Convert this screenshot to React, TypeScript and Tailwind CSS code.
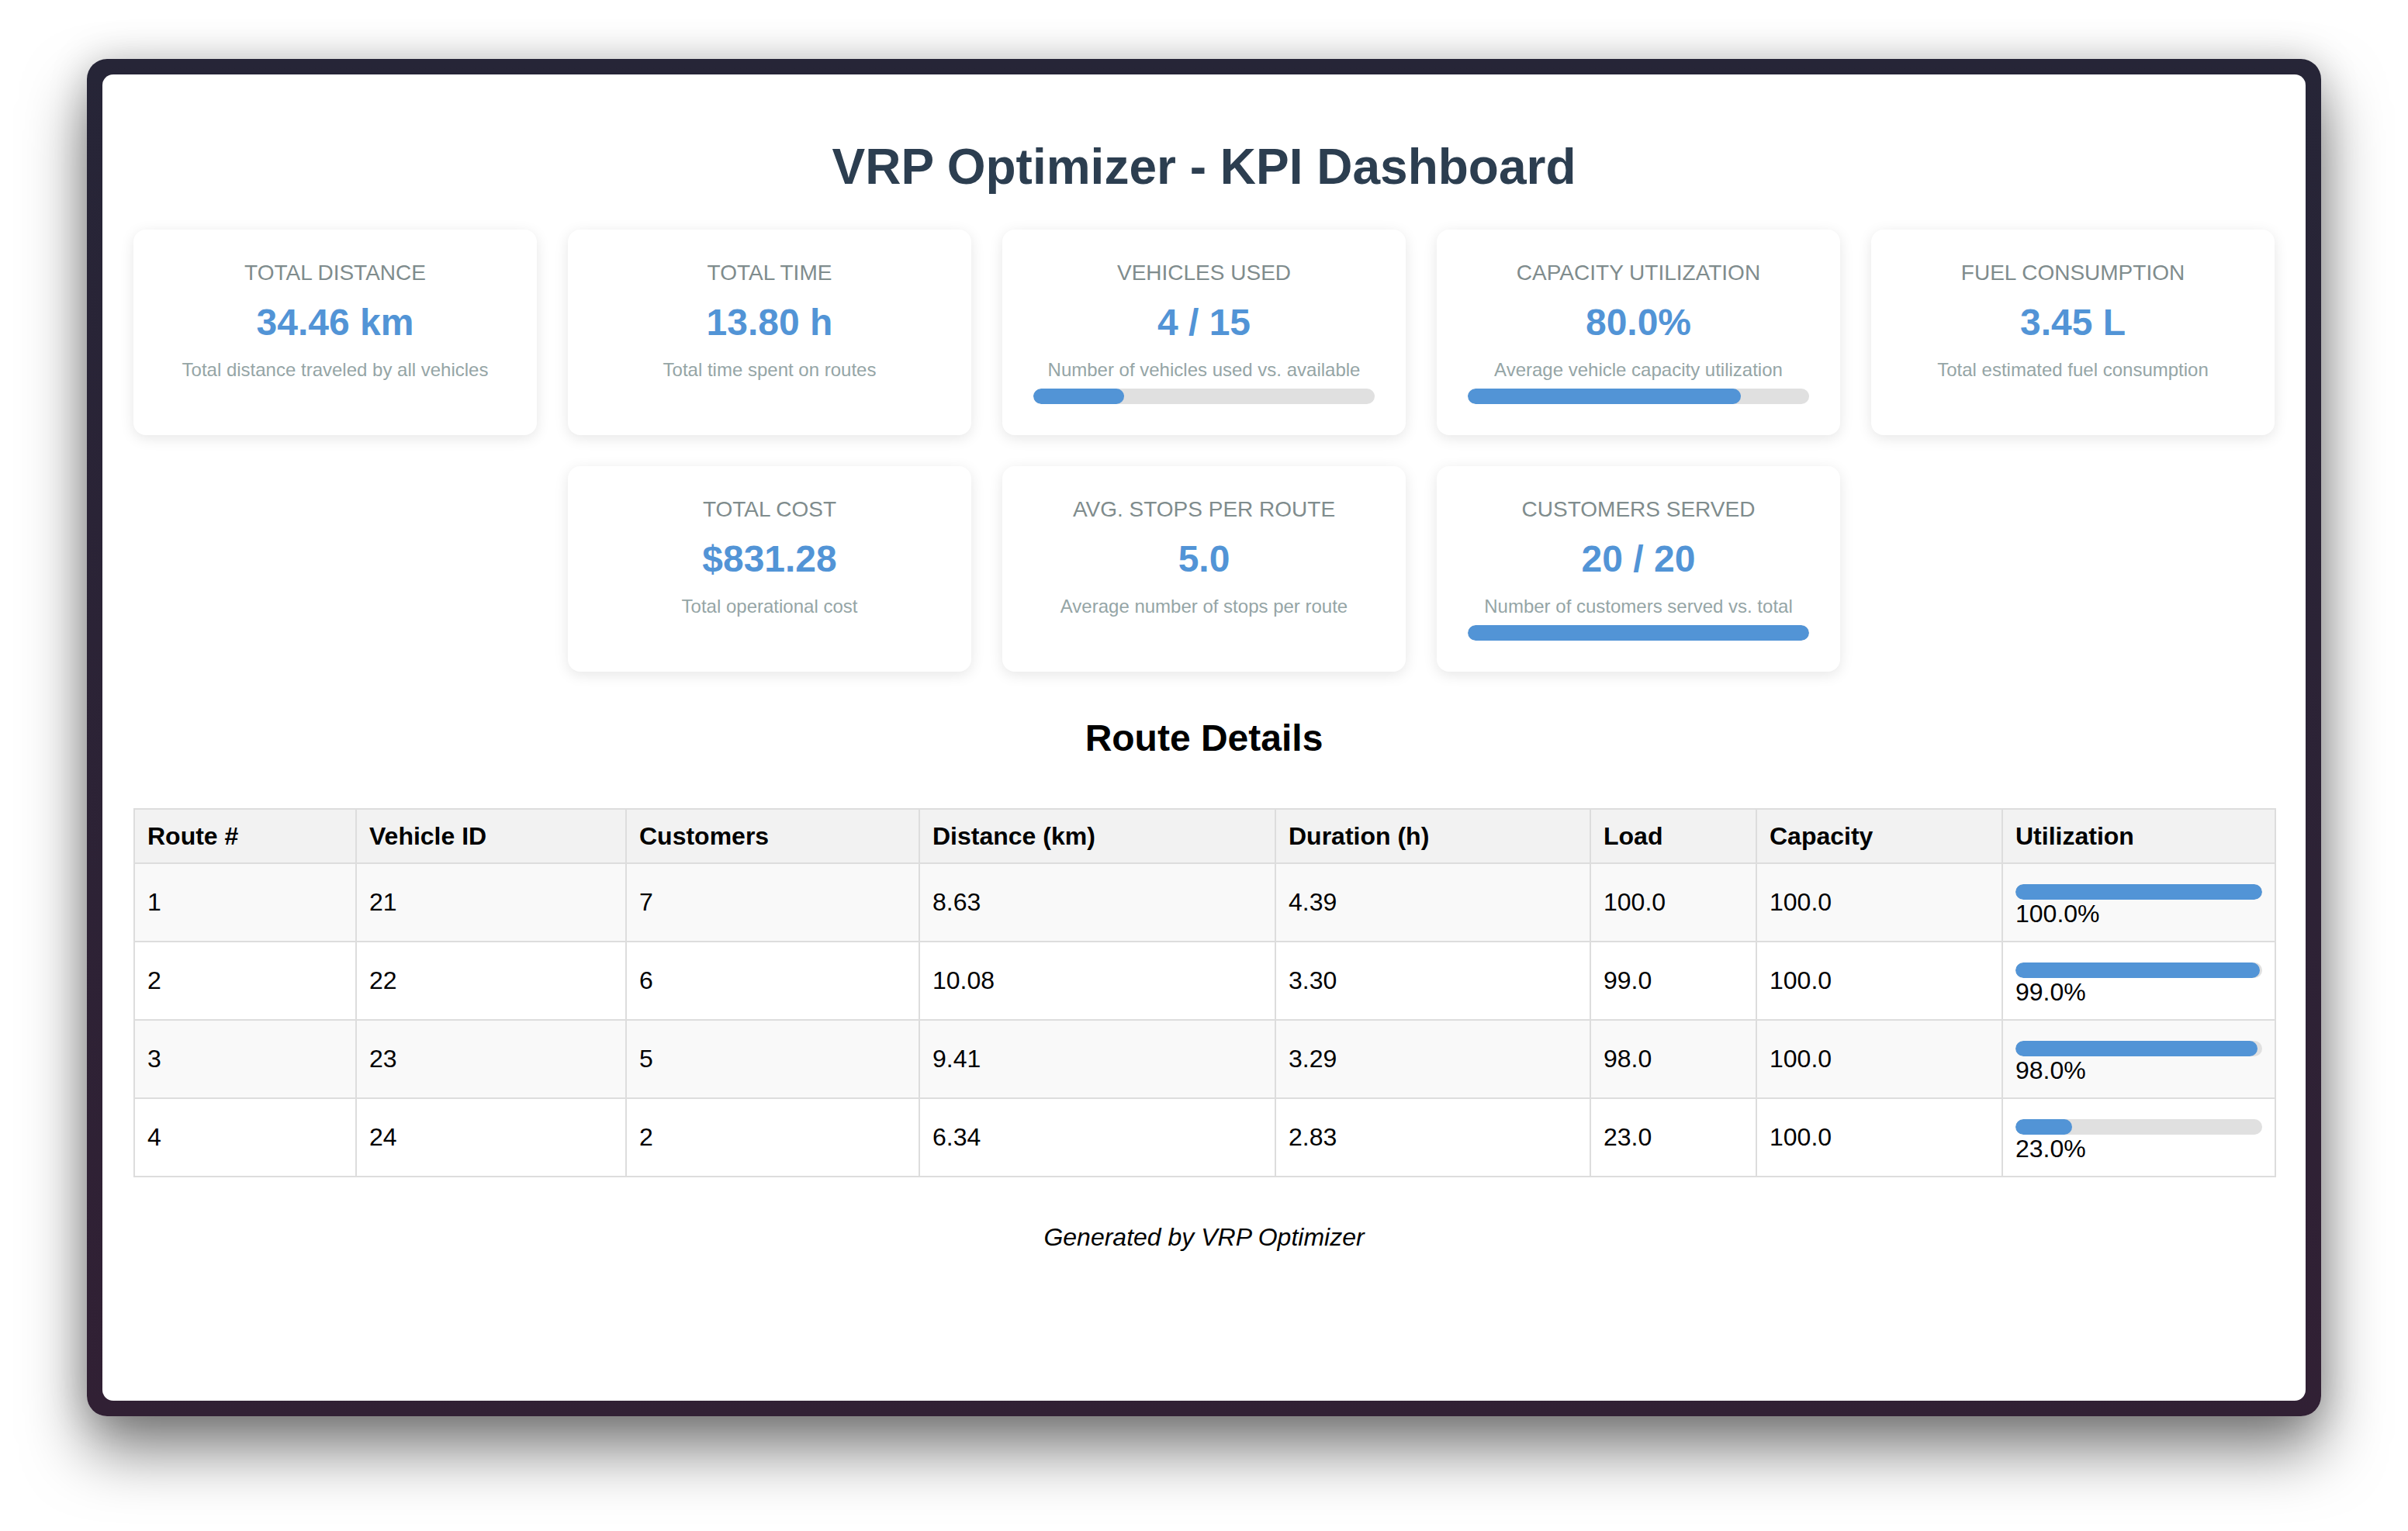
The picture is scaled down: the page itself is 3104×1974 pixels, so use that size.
import React from "react";

type Kpi = { label: string; value: string; desc: string; pct?: number };

const row1: Kpi[] = [
  { label: "Total Distance", value: "34.46 km", desc: "Total distance traveled by all vehicles" },
  { label: "Total Time", value: "13.80 h", desc: "Total time spent on routes" },
  { label: "Vehicles Used", value: "4 / 15", desc: "Number of vehicles used vs. available", pct: 26.67 },
  { label: "Capacity Utilization", value: "80.0%", desc: "Average vehicle capacity utilization", pct: 80 },
  { label: "Fuel Consumption", value: "3.45 L", desc: "Total estimated fuel consumption" },
  { label: "Total Cost", value: "$831.28", desc: "Total operational cost" },
  { label: "Avg. Stops per Route", value: "5.0", desc: "Average number of stops per route" },
  { label: "Customers Served", value: "20 / 20", desc: "Number of customers served vs. total", pct: 100 },
];

const routes = [
  ["1", "21", "7", "8.63", "4.39", "100.0", "100.0", 100],
  ["2", "22", "6", "10.08", "3.30", "99.0", "100.0", 99],
  ["3", "23", "5", "9.41", "3.29", "98.0", "100.0", 98],
  ["4", "24", "2", "6.34", "2.83", "23.0", "100.0", 23],
] as const;

const headers = ["Route #", "Vehicle ID", "Customers", "Distance (km)", "Duration (h)", "Load", "Capacity", "Utilization"];
const widths = [286, 348, 378, 459, 406, 214, 317, 352];

function Bar({ pct }: { pct: number }) {
  return (
    <div className="h-[20px] w-full rounded-full bg-[#e0e0e0] overflow-hidden">
      <div className="h-full rounded-full bg-[#5294d6]" style={{ width: `${pct}%` }} />
    </div>
  );
}

function Card({ k }: { k: Kpi }) {
  return (
    <div className="w-[520px] rounded-[16px] bg-white p-[40px] text-center shadow-[0_4px_18px_rgba(0,0,0,0.1)]">
      <div className="text-[28px] leading-[32px] uppercase text-[#7f8c8d]">{k.label}</div>
      <div className="mt-[20px] text-[48px] leading-[55px] font-bold text-[#5294d6]">{k.value}</div>
      <div className="mt-[20px] text-[24px] leading-[28px] text-[#95a5a6]">{k.desc}</div>
      {k.pct !== undefined && (
        <div className="mt-[10px]">
          <Bar pct={k.pct} />
        </div>
      )}
    </div>
  );
}

export default function App() {
  return (
    <div
      className="min-h-screen w-full bg-white flex justify-center pt-[76px] pb-[148px]"
      style={{ fontFamily: '"Liberation Sans", Arial, Helvetica, sans-serif' }}
    >
      <div className="w-[2880px] h-[1750px] rounded-[26px] p-[20px] bg-gradient-to-b from-[#262537] to-[#312034] shadow-[0_44px_80px_rgba(0,0,0,0.5),0_0_50px_rgba(0,0,0,0.18)]">
        <div className="w-full h-full bg-white rounded-[14px] px-[40px] pt-[40px] overflow-hidden">
          <h1 className="mt-[42px] mb-[44px] text-center text-[64px] leading-[74px] font-bold text-[#2c3e50]">
            VRP Optimizer - KPI Dashboard
          </h1>

          <div className="flex flex-wrap justify-center gap-[40px]">
            {row1.map((k) => (
              <Card key={k.label} k={k} />
            ))}
          </div>

          <h2 className="mt-[58px] mb-[63px] text-center text-[48px] leading-[55px] font-bold text-black">
            Route Details
          </h2>

          <table className="w-[2760px] table-fixed border-collapse text-[32px] text-black">
            <colgroup>
              {widths.map((w, i) => (
                <col key={i} style={{ width: `${w}px` }} />
              ))}
            </colgroup>
            <thead>
              <tr className="bg-[#f2f2f2]">
                {headers.map((h) => (
                  <th
                    key={h}
                    className="border-2 border-[#dddddd] px-[16px] py-[16px] text-left font-bold leading-[36px]"
                  >
                    {h}
                  </th>
                ))}
              </tr>
            </thead>
            <tbody>
              {routes.map((r, i) => (
                <tr key={r[0]} className={i % 2 === 0 ? "bg-[#f9f9f9]" : "bg-white"}>
                  {r.slice(0, 7).map((c, j) => (
                    <td key={j} className="border-2 border-[#dddddd] px-[16px] py-[16px] align-middle leading-[37px]">
                      {c}
                    </td>
                  ))}
                  <td className="border-2 border-[#dddddd] px-[16px] pt-[26px] pb-[16px] align-middle">
                    <Bar pct={r[7] as number} />
                    <div className="leading-[37px]">{(r[7] as number).toFixed(1)}%</div>
                  </td>
                </tr>
              ))}
            </tbody>
          </table>

          <p className="mt-[59px] text-center italic text-[32px] leading-[37px] text-black">
            Generated by VRP Optimizer
          </p>
        </div>
      </div>
    </div>
  );
}
